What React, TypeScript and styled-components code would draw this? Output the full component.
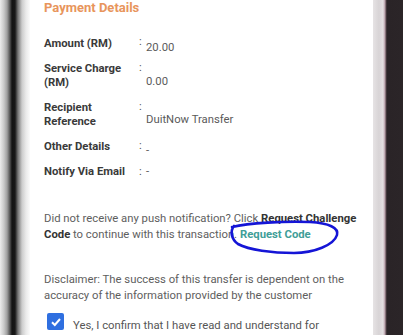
import React from "react";
import styled, { createGlobalStyle } from "styled-components";

const Global = createGlobalStyle`
  html, body { margin: 0; padding: 0; background: #ffffff; }
  body { font-family: Roboto, "Noto Sans", Arial, sans-serif; }
  * { box-sizing: border-box; }
`;

const Frame = styled.div`
  display: flex;
  width: 403px;
  height: 335px;
  overflow: hidden;
`;

const LeftBezel = styled.div`
  width: 30px;
  flex: none;
  background: linear-gradient(
    to right,
    #ececec 0px,
    #c8c8c8 4px,
    #a0a0a0 7px,
    #505050 10px,
    #141414 12px,
    #181818 15px,
    #787878 18px,
    #cccccc 22px,
    #eaeaea 26px,
    #fbfbfb 30px
  );
`;

const RightBezel = styled.div`
  width: 30px;
  flex: none;
  background: linear-gradient(
    to right,
    #e6e3e4 0px,
    #d8d4d6 6px,
    #e4e0e2 10px,
    #b79ea8 12px,
    #5a4a50 13px,
    #2a2427 14px,
    #2b2528 30px
  );
`;

const Screen = styled.div`
  position: relative;
  flex: 1;
  background: #ffffff;
  padding: 0 10px 0 14px;
`;

const Title = styled.div`
  font-size: 13px;
  line-height: 16px;
  font-weight: 700;
  color: #e8955c;
`;

const Details = styled.div`
  display: flex;
  flex-direction: column;
  gap: 11px;
  margin-top: 21px;
`;

const Row = styled.div`
  display: grid;
  grid-template-columns: 95px 6px 1fr;
  align-items: start;
`;

const Label = styled.div`
  font-size: 11.3px;
  line-height: 14px;
  font-weight: 700;
  color: #3a3a3a;
`;

const Colon = styled.div<{ $shift: number }>`
  font-size: 11.3px;
  line-height: 14px;
  color: #555;
  transform: translateY(${(p) => p.$shift}px);
`;

const Value = styled.div<{ $shift: number }>`
  font-size: 11.3px;
  line-height: 14px;
  color: #5a5a5a;
  align-self: center;
  transform: translateY(${(p) => p.$shift}px);
  padding-left: 1px;
`;

const Paragraph = styled.p<{ $top: number }>`
  margin: ${(p) => p.$top}px 0 0 0;
  font-size: 11.3px;
  line-height: 16px;
  color: #5e5e5e;
  position: relative;
`;

const Strong = styled.b`
  color: #333;
  font-weight: 700;
`;

const Link = styled.span`
  color: #3f9e98;
  font-weight: 700;
`;

const Scribble = styled.svg`
  position: absolute;
  left: 0;
  top: 0;
  pointer-events: none;
  overflow: visible;
`;

const ConfirmRow = styled.label`
  display: flex;
  align-items: flex-start;
  gap: 9px;
  margin-top: 9px;
  padding-left: 3px;
  font-size: 11.3px;
  line-height: 16px;
  color: #555;
`;

const Check = styled.span`
  width: 17px;
  height: 17px;
  flex: none;
  border-radius: 2px;
  background: #2f6fe0;
  display: flex;
  align-items: center;
  justify-content: center;
`;

const ConfirmText = styled.span`
  margin-top: 5px;
  white-space: nowrap;
`;

const rows = [
  { label: "Amount (RM)", value: "20.00", colon: -2, shift: 4 },
  { label: "Service Charge (RM)", value: "0.00", colon: -1, shift: 5.5 },
  { label: "Recipient Reference", value: "DuitNow Transfer", colon: -1, shift: 4.5 },
  { label: "Other Details", value: "-", colon: -1, shift: 4 },
  { label: "Notify Via Email", value: "-", colon: 0, shift: 0 },
];

export default function App() {
  return (
    <>
      <Global />
      <Frame>
        <LeftBezel />
        <Screen>
          <Title>Payment Details</Title>
          <Details>
            {rows.map((r) => (
              <Row key={r.label}>
                <Label>{r.label}</Label>
                <Colon $shift={r.colon}>:</Colon>
                <Value $shift={r.shift}>{r.value}</Value>
              </Row>
            ))}
          </Details>
          <Paragraph $top={32}>
            Did not receive any push notification? Click{" "}
            <Strong>Request Challenge Code</Strong> to continue with this transaction.{" "}
            <Link>Request Code</Link>
            <Scribble width="1" height="1">
              <path
                d="M188 16 C 205 12, 240 10, 266 11 C 285 12, 295 17, 293 24 C 290 34, 270 42, 250 42 C 228 42, 205 39, 194 33 C 187 28, 186 20, 190 15"
                fill="none"
                stroke="#1515d6"
                strokeWidth="2.6"
                strokeLinecap="round"
              />
            </Scribble>
          </Paragraph>
          <Paragraph $top={29}>
            Disclaimer: The success of this transfer is dependent on the accuracy of the
            information provided by the customer
          </Paragraph>
          <ConfirmRow>
            <Check>
              <svg width="12" height="12" viewBox="0 0 12 12">
                <path d="M2 6.2 L4.8 9 L10 3" fill="none" stroke="#fff" strokeWidth="2" />
              </svg>
            </Check>
            <ConfirmText>Yes, I confirm that I have read and understand for</ConfirmText>
          </ConfirmRow>
        </Screen>
        <RightBezel />
      </Frame>
    </>
  );
}
